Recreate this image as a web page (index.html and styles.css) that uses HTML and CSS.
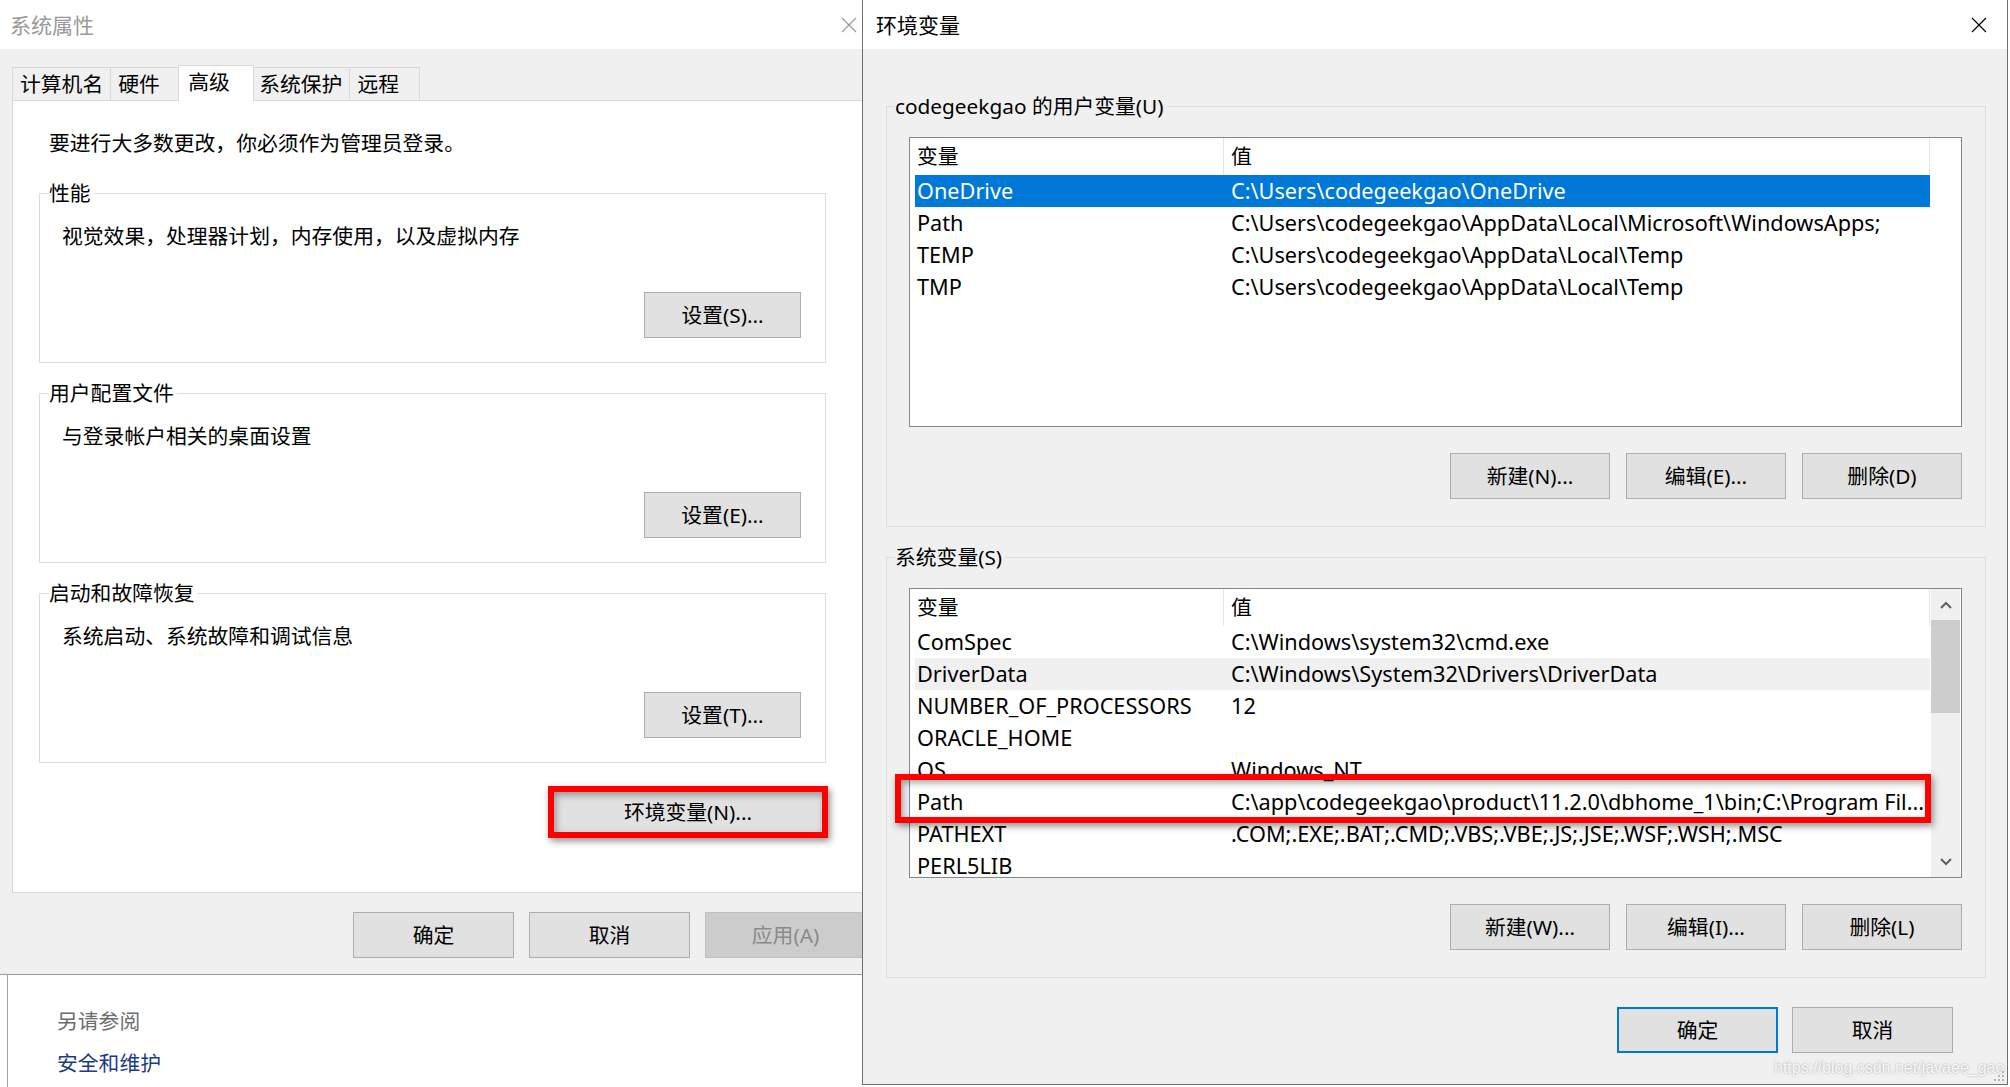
FILE: index.html
```html
<!DOCTYPE html>
<html lang="zh-CN">
<head>
    <meta charset="UTF-8">
    <title>系统属性 - 环境变量</title>
    <link rel="stylesheet" href="styles.css">
</head>
<body>
<div class="desktop">
    <div class="left-col">
        <div class="win win-sys">
            <div class="titlebar">
                <span class="title">系统属性</span>
                <svg class="close" viewBox="0 0 16 16"><path d="M1 1L15 15M15 1L1 15" stroke="currentColor" stroke-width="1.2"/></svg>
            </div>
            <div class="tabs">
                <div class="tab">计算机名</div>
                <div class="tab">硬件</div>
                <div class="tab active">高级</div>
                <div class="tab">系统保护</div>
                <div class="tab">远程</div>
            </div>
            <div class="panel">
                <p class="intro">要进行大多数更改，你必须作为管理员登录。</p>
                <fieldset class="group">
                    <legend>性能</legend>
                    <p class="group-text">视觉效果，处理器计划，内存使用，以及虚拟内存</p>
                    <button class="btn">设置(S)...</button>
                </fieldset>
                <fieldset class="group">
                    <legend>用户配置文件</legend>
                    <p class="group-text">与登录帐户相关的桌面设置</p>
                    <button class="btn">设置(E)...</button>
                </fieldset>
                <fieldset class="group">
                    <legend>启动和故障恢复</legend>
                    <p class="group-text">系统启动、系统故障和调试信息</p>
                    <button class="btn">设置(T)...</button>
                </fieldset>
                <button class="btn btn-env">环境变量(N)...</button>
            </div>
            <div class="dialog-buttons">
                <button class="btn">确定</button>
                <button class="btn">取消</button>
                <button class="btn btn-disabled">应用(A)</button>
            </div>
            <div class="highlight hl-env"></div>
        </div>
        <div class="behind">
            <div class="see-also">另请参阅</div>
            <a class="link" href="#">安全和维护</a>
        </div>
    </div>

    <div class="win win-env">
        <div class="titlebar">
            <span class="title">环境变量</span>
            <svg class="close" viewBox="0 0 16 16"><path d="M1 1L15 15M15 1L1 15" stroke="currentColor" stroke-width="1.2"/></svg>
        </div>
        <div class="env-body">
            <fieldset class="env-group">
                <legend>codegeekgao 的用户变量(U)</legend>
                <div class="list">
                    <div class="list-rows">
                        <div class="list-head"><span>变量</span><span>值</span></div>
                        <div class="list-row selected"><span>OneDrive</span><span>C:\Users\codegeekgao\OneDrive</span></div>
                        <div class="list-row"><span>Path</span><span>C:\Users\codegeekgao\AppData\Local\Microsoft\WindowsApps;</span></div>
                        <div class="list-row"><span>TEMP</span><span>C:\Users\codegeekgao\AppData\Local\Temp</span></div>
                        <div class="list-row"><span>TMP</span><span>C:\Users\codegeekgao\AppData\Local\Temp</span></div>
                    </div>
                </div>
                <div class="list-actions">
                    <button class="btn">新建(N)...</button>
                    <button class="btn">编辑(E)...</button>
                    <button class="btn">删除(D)</button>
                </div>
            </fieldset>

            <fieldset class="env-group">
                <legend>系统变量(S)</legend>
                <div class="list">
                    <div class="list-rows">
                        <div class="list-head"><span>变量</span><span>值</span></div>
                        <div class="list-row"><span>ComSpec</span><span>C:\Windows\system32\cmd.exe</span></div>
                        <div class="list-row hover"><span>DriverData</span><span>C:\Windows\System32\Drivers\DriverData</span></div>
                        <div class="list-row"><span>NUMBER_OF_PROCESSORS</span><span>12</span></div>
                        <div class="list-row"><span>ORACLE_HOME</span><span></span></div>
                        <div class="list-row"><span>OS</span><span>Windows_NT</span></div>
                        <div class="list-row"><span>Path</span><span>C:\app\codegeekgao\product\11.2.0\dbhome_1\bin;C:\Program Fil...</span></div>
                        <div class="list-row"><span>PATHEXT</span><span>.COM;.EXE;.BAT;.CMD;.VBS;.VBE;.JS;.JSE;.WSF;.WSH;.MSC</span></div>
                        <div class="list-row"><span>PERL5LIB</span><span></span></div>
                    </div>
                    <div class="scrollbar">
                        <div class="sb-btn">
                            <svg width="12" height="8" viewBox="0 0 12 8"><polyline points="1,7 6,2 11,7" fill="none" stroke="#606060" stroke-width="2"/></svg>
                        </div>
                        <div class="sb-thumb"></div>
                        <div class="sb-track"></div>
                        <div class="sb-btn">
                            <svg width="12" height="8" viewBox="0 0 12 8"><polyline points="1,1 6,6 11,1" fill="none" stroke="#606060" stroke-width="2"/></svg>
                        </div>
                    </div>
                </div>
                <div class="list-actions">
                    <button class="btn">新建(W)...</button>
                    <button class="btn">编辑(I)...</button>
                    <button class="btn">删除(L)</button>
                </div>
            </fieldset>

            <div class="env-actions">
                <button class="btn btn-default">确定</button>
                <button class="btn">取消</button>
            </div>
        </div>
        <div class="highlight hl-path"></div>
        <div class="watermark">https://blog.csdn.net/javaee_gao</div>
        <svg class="grip" width="12" height="12" viewBox="0 0 12 12">
            <rect x="9" y="1" width="2" height="2" fill="#b5b5b5"/>
            <rect x="5" y="5" width="2" height="2" fill="#b5b5b5"/>
            <rect x="9" y="5" width="2" height="2" fill="#b5b5b5"/>
            <rect x="1" y="9" width="2" height="2" fill="#b5b5b5"/>
            <rect x="5" y="9" width="2" height="2" fill="#b5b5b5"/>
            <rect x="9" y="9" width="2" height="2" fill="#b5b5b5"/>
        </svg>
    </div>
</div>
</body>
</html>
```

FILE: styles.css
```css
* {
    box-sizing: border-box;
}

body {
    margin: 0;
    width: 2010px;
    height: 1087px;
    overflow: hidden;
    background: #fff;
    font-family: "Noto Sans", "Noto Sans CJK SC", sans-serif;
    font-size: 20.8px;
    line-height: 28px;
    color: #000;
}

.desktop {
    display: flex;
    height: 1087px;
}

.left-col {
    width: 862px;
    flex: none;
    display: flex;
    flex-direction: column;
}

/* title bars */
.titlebar {
    height: 49px;
    background: #fff;
    display: flex;
    align-items: center;
    justify-content: space-between;
}

.title {
    font-size: 21px;
}

.close {
    width: 16px;
    height: 16px;
}

.btn {
    font: inherit;
    height: 46px;
    padding: 0;
    color: #000;
    background: #e1e1e1;
    border: 1px solid #adadad;
    line-height: 42px;
}

/* system properties window */
.win-sys {
    position: relative;
    height: 975px;
    overflow: hidden;
    background: #f0f0f0;
    border-bottom: 1px solid #9d9d9d;
}

.win-sys .titlebar {
    padding: 0 5px 0 10px;
    color: #9a9a9a;
}

.tabs {
    display: flex;
    align-items: flex-end;
    height: 36px;
    margin-top: 16px;
    margin-bottom: -1px;
    padding-left: 12px;
}

.tab {
    position: relative;
    height: 33px;
    margin-bottom: 1px;
    min-width: 71px;
    padding: 0 7px;
    line-height: 32px;
    background: #f0f0f0;
    border: 1px solid #d9d9d9;
    border-bottom: 0;
}

.tab + .tab {
    margin-left: -1px;
}

.tab.active {
    z-index: 1;
    height: 36px;
    margin: 0 -2px 0 -3px;
    min-width: 76px;
    padding: 0 9px;
    line-height: 33px;
    background: #fff;
}

.panel {
    margin-left: 12px;
    width: 880px;
    height: 793px;
    padding: 28px 65px 0 26px;
    background: #fff;
    border: 1px solid #d9d9d9;
    display: flex;
    flex-direction: column;
    align-items: flex-start;
}

.intro {
    margin: 0 0 22px 10px;
}

.group {
    width: 100%;
    min-width: 0;
    margin: 0;
    padding: 15px 24px 24px 22px;
    border: 1px solid #dcdcdc;
    display: flex;
    flex-direction: column;
}

.group + .group {
    margin-top: 16px;
}

.group legend,
.env-group legend {
    padding: 0 3px 0 0;
    line-height: 28px;
}

.group legend {
    margin-left: -13px;
}

.group-text {
    margin: 0;
}

.group .btn {
    align-self: flex-end;
    width: 157px;
    margin-top: 42px;
}

.btn-env {
    align-self: flex-end;
    width: 276px;
    margin-top: 26px;
}

.dialog-buttons {
    display: flex;
    gap: 15px;
    margin-top: 19px;
    padding-left: 353px;
}

.dialog-buttons .btn {
    flex: none;
    width: 161px;
}

.btn-disabled {
    background: #cccccc;
    border-color: #bfbfbf;
    color: #8a8a8a;
}

.highlight {
    position: absolute;
    border: 6px solid #ff0000;
    box-shadow: 2px 3px 7px rgba(0, 0, 0, 0.45), inset 2px 3px 7px rgba(0, 0, 0, 0.35);
    z-index: 5;
}

.hl-env {
    left: 548px;
    top: 786px;
    width: 280px;
    height: 52px;
}

/* window behind, lower left */
.behind {
    flex: 1;
    margin-left: 7px;
    padding: 32px 0 0 49px;
    background: #fff;
    border-left: 1px solid #a5a5a5;
}

.see-also {
    color: #6d6d6d;
}

.link {
    display: block;
    margin-top: 14px;
    color: #1d3c86;
    text-decoration: none;
}

/* environment variables window */
.win-env {
    position: relative;
    flex: none;
    width: 1146px;
    height: 1085px;
    background: #f0f0f0;
    border: 1px solid #6e6e6e;
    border-top: 0;
}

.win-env .titlebar {
    padding: 0 20px 0 13px;
}

.env-body {
    padding: 43px 21px 0 23px;
}

.env-group {
    width: 1100px;
    margin: 0;
    padding: 17px 23px 27px 22px;
    border: 1px solid #dcdcdc;
}

.env-group legend {
    margin-left: -14px;
}

.env-group + .env-group {
    margin-top: 16px;
}

.list {
    height: 290px;
    display: flex;
    overflow: hidden;
    background: #fff;
    border: 1px solid #828790;
}

.list-rows {
    flex: none;
    width: 1015px;
    margin-left: 5px;
}

.list-head,
.list-row {
    display: grid;
    grid-template-columns: 309px 706px;
    white-space: nowrap;
}

.list-head {
    height: 37px;
    line-height: 37px;
}

.list-head span {
    border-right: 1px solid #e5e5e5;
}

.list-row {
    height: 32px;
    line-height: 32px;
    font-size: 21.7px;
}

.list-row span {
    overflow: hidden;
}

.list-head span:first-child,
.list-row span:first-child {
    padding-left: 2px;
}

.list-head span + span,
.list-row span + span {
    padding-left: 7px;
}

.list-row.selected {
    background: #0078d7;
    color: #fff;
}

.list-row.hover {
    background: #f0f0f0;
}

.scrollbar {
    width: 29px;
    margin-left: auto;
    margin-right: 1px;
    display: flex;
    flex-direction: column;
    background: #f0f0f0;
}

.sb-btn {
    height: 31px;
    display: flex;
    align-items: center;
    justify-content: center;
}

.sb-thumb {
    height: 93px;
    background: #cdcdcd;
}

.sb-track {
    flex: 1;
}

.list-actions {
    display: flex;
    justify-content: flex-end;
    gap: 16px;
    margin-top: 26px;
}

.list-actions .btn {
    width: 160px;
}

.env-actions {
    display: flex;
    justify-content: flex-end;
    gap: 14px;
    margin-top: 29px;
    padding-right: 33px;
}

.env-actions .btn {
    width: 161px;
}

.btn-default {
    border: 2px solid #0078d7;
}

.hl-path {
    left: 32px;
    top: 774px;
    width: 1036px;
    height: 49px;
}

.watermark {
    position: absolute;
    left: 911px;
    top: 1057px;
    font-family: "Liberation Sans", sans-serif;
    font-size: 16px;
    line-height: 22px;
    color: rgba(255, 255, 255, 0.9);
    text-shadow: 0 0 2px rgba(0, 0, 0, 0.35);
}

.grip {
    position: absolute;
    right: 2px;
    bottom: 2px;
}
```
